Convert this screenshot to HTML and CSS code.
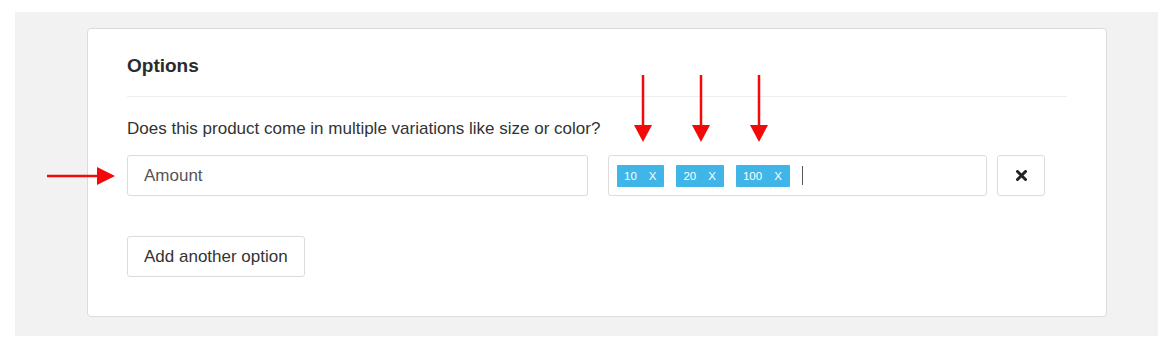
FILE: index.html
```html
<!DOCTYPE html>
<html lang="en">
<head>
  <meta charset="UTF-8" />
  <title>Options</title>
  <link rel="stylesheet" href="styles.css">
</head>
<body>
  <div class="page">
    <section class="card">
      <h2 class="card-title">Options</h2>
      <p class="question">Does this product come in multiple variations like size or color?</p>

      <div class="option-row">
        <div class="field option-name">Amount</div>
        <div class="field option-values">
          <span class="tag">10 <span class="tag-x">X</span></span>
          <span class="tag">20 <span class="tag-x">X</span></span>
          <span class="tag">100 <span class="tag-x">X</span></span>
          <span class="caret"></span>
        </div>
        <button class="remove-btn" aria-label="Remove option">
          <svg width="11" height="11" viewBox="0 0 11 11">
            <path d="M1.5 1.5 L9.5 9.5 M9.5 1.5 L1.5 9.5" stroke="#222" stroke-width="3" stroke-linecap="round" />
          </svg>
        </button>
      </div>

      <button class="add-btn">Add another option</button>
    </section>

    <!-- annotation arrows -->
    <svg class="arrow arrow-left" width="70" height="20" viewBox="0 0 70 20">
      <line x1="0" y1="10" x2="52" y2="10" stroke="#f20a0a" stroke-width="2.5" />
      <polygon points="50,1 68,10 50,19" fill="#f20a0a" />
    </svg>
    <svg class="arrow arrow-down a1" width="20" height="68" viewBox="0 0 20 68">
      <line x1="10" y1="0" x2="10" y2="52" stroke="#f20a0a" stroke-width="2.5" />
      <polygon points="1,50 19,50 10,67" fill="#f20a0a" />
    </svg>
    <svg class="arrow arrow-down a2" width="20" height="68" viewBox="0 0 20 68">
      <line x1="10" y1="0" x2="10" y2="52" stroke="#f20a0a" stroke-width="2.5" />
      <polygon points="1,50 19,50 10,67" fill="#f20a0a" />
    </svg>
    <svg class="arrow arrow-down a3" width="20" height="68" viewBox="0 0 20 68">
      <line x1="10" y1="0" x2="10" y2="52" stroke="#f20a0a" stroke-width="2.5" />
      <polygon points="1,50 19,50 10,67" fill="#f20a0a" />
    </svg>
  </div>
</body>
</html>
```

FILE: styles.css
```css
* {
  box-sizing: border-box;
}
body {
  margin: 0;
  background: #fff;
  font-family: "Liberation Sans", Arial, sans-serif;
  color: #333;
}

.page {
  position: relative;
  margin: 12px 11px 0 15px;
  background: #f2f2f2;
  padding: 16px 51px 19px 72px;
}

.card {
  background: #fff;
  border: 1px solid #dcdcdc;
  border-radius: 4px;
  padding: 25px 39px 39px 39px;
}
.card-title {
  margin: 0;
  font-size: 19px;
  line-height: 24px;
  font-weight: 700;
  color: #2b2b2b;
  padding-bottom: 18px;
  border-bottom: 1px solid #eee;
}
.question {
  margin: 21px 0 15px;
  font-size: 17px;
  line-height: 22px;
}

.option-row {
  display: flex;
  align-items: center;
}
.field {
  height: 41px;
  border: 1px solid #dcdcdc;
  border-radius: 3px;
  background: #fff;
}
.option-name {
  width: 461px;
  padding: 0 16px;
  font-size: 17px;
  line-height: 39px;
  color: #555;
}
.option-values {
  width: 379px;
  margin-left: 20px;
  padding: 0 8px;
  display: flex;
  align-items: center;
  gap: 12px;
}
.tag {
  display: inline-flex;
  align-items: center;
  height: 22px;
  padding: 0 8px 0 7px;
  background: #3fb5e8;
  color: #fff;
  font-size: 11.5px;
  border-radius: 1px;
}
.tag-x {
  margin-left: 12px;
}
.caret {
  width: 1px;
  height: 19px;
  background: #555;
}

.remove-btn {
  width: 48px;
  height: 41px;
  margin-left: 10px;
  border: 1px solid #dcdcdc;
  border-radius: 3px;
  background: #fff;
  display: flex;
  align-items: center;
  justify-content: center;
  padding: 0;
}

.add-btn {
  margin-top: 40px;
  height: 41px;
  padding: 0 16px;
  border: 1px solid #dcdcdc;
  border-radius: 3px;
  background: #fff;
  font-family: "Liberation Sans", Arial, sans-serif;
  font-size: 17px;
  color: #333;
}

.arrow {
  position: absolute;
}
.arrow-left {
  left: 32px;
  top: 154px;
}
.arrow-down {
  top: 63px;
}
.a1 { left: 618px; }
.a2 { left: 676px; }
.a3 { left: 734px; }
```
